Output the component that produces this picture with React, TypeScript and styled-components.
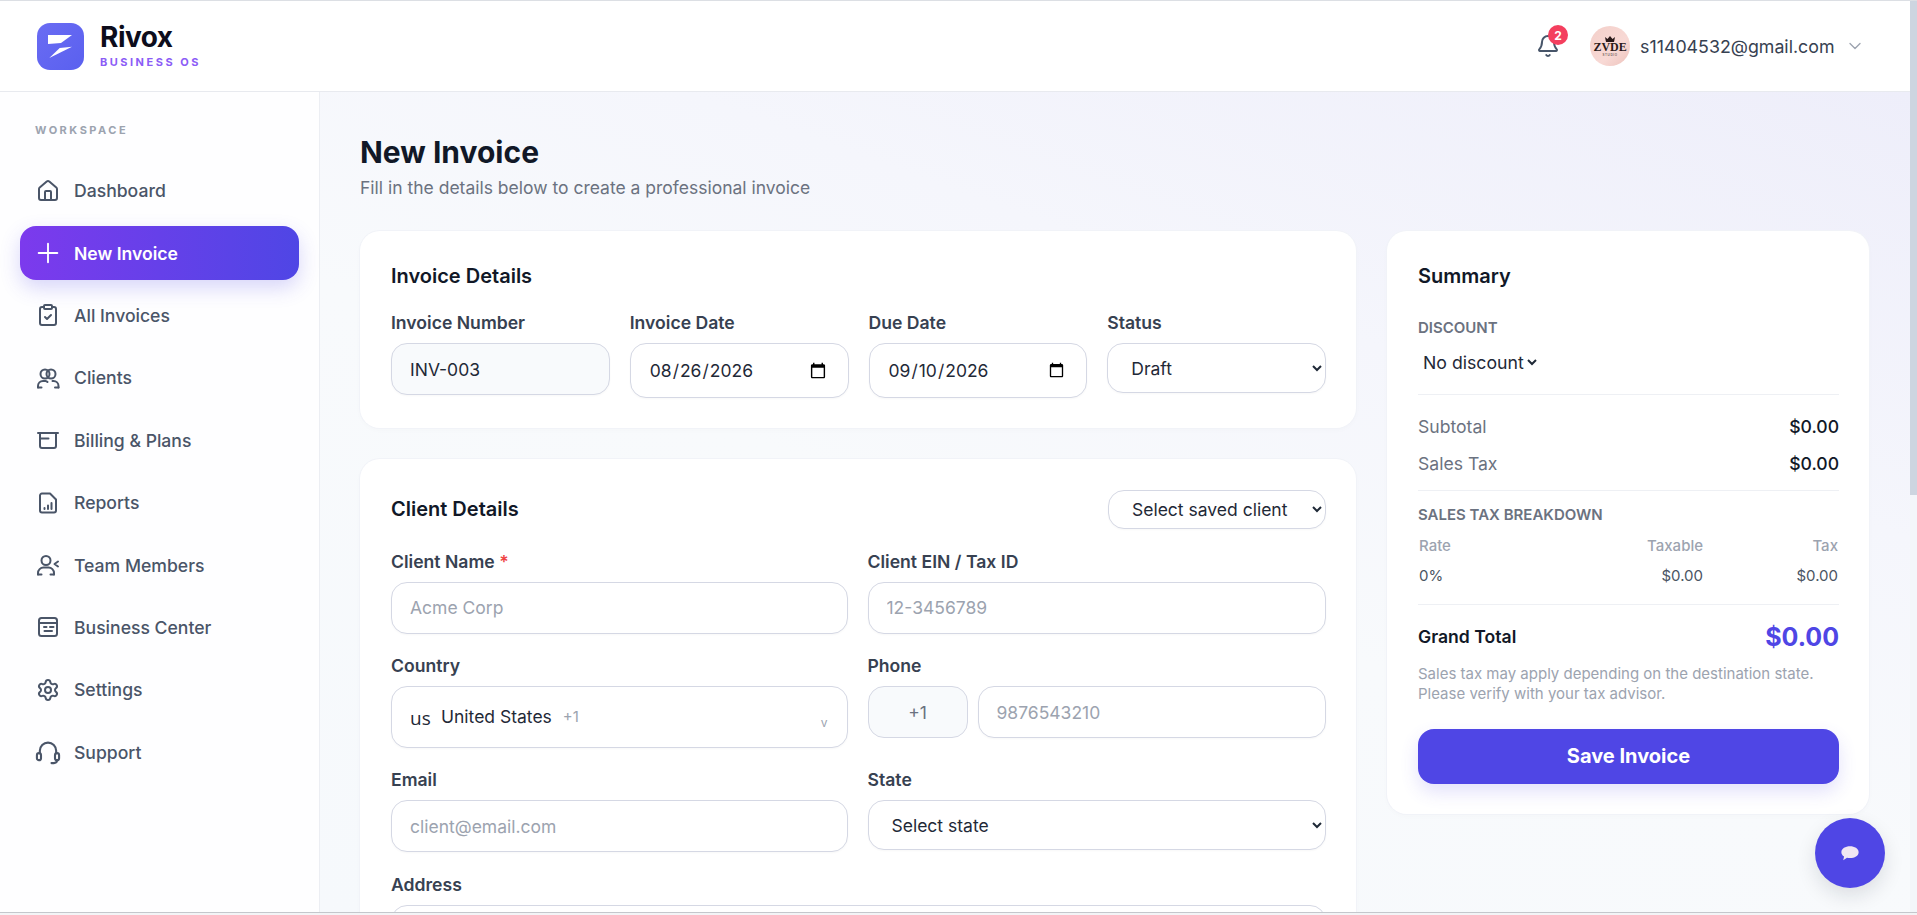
import { FunctionComponent, ReactNode } from 'react';
import styled, { createGlobalStyle } from 'styled-components';
import { Bell, ChevronDown, ClipboardCheck, House, Plus, Settings } from 'lucide-react';

const GlobalStyle = createGlobalStyle`
  html, body {
    margin: 0;
    height: 100%;
    overflow: hidden;
    background: #fff;
    font-family: Inter, "Noto Sans", sans-serif;
  }
  * { box-sizing: border-box; }
  input::placeholder { color: #9ca3af; }
`;

const Frame = styled.div`
  height: 100vh;
  display: flex;
  flex-direction: column;
`;

const TopEdge = styled.div`
  height: 1px;
  flex: none;
  background: #dcdfe4;
`;

const BottomEdge = styled.div`
  height: 3px;
  flex: none;
  border-top: 1px solid #c4c7cc;
  background: #f3f4f6;
`;

const Shell = styled.div`
  flex: 1;
  min-height: 0;
  display: flex;
`;

const PageColumn = styled.div`
  flex: 1;
  min-width: 0;
  display: flex;
  flex-direction: column;
`;

const ScrollTrack = styled.div`
  width: 7px;
  flex: none;
  background: #f3f6fa;
`;

const ScrollThumb = styled.div`
  height: 494px;
  background: #cdd5e0;
`;

const Header = styled.header`
  height: 91px;
  flex: none;
  display: flex;
  align-items: center;
  justify-content: space-between;
  padding: 0 45px 0 37px;
  background: #fff;
  border-bottom: 1px solid #e8eaef;
`;

const Brand = styled.div`
  display: flex;
  align-items: center;
  gap: 16px;
`;

const LogoMark = styled.svg`
  width: 47px;
  height: 47px;
  display: block;
`;

const BrandText = styled.div`
  margin-top: -1px;
`;

const BrandName = styled.div`
  font-size: 28px;
  line-height: 30px;
  font-weight: 700;
  letter-spacing: -0.5px;
  color: #0d0d1c;
`;

const BrandTag = styled.div`
  font-size: 11px;
  line-height: 14px;
  margin-top: 3px;
  font-weight: 700;
  letter-spacing: 2.5px;
  color: #8b5cf6;
`;

const UserArea = styled.div`
  display: flex;
  align-items: center;
`;

const BellWrap = styled.div`
  position: relative;
  width: 24px;
  height: 24px;
  margin-right: 30px;
  color: #475569;
`;

const BellBadge = styled.span`
  position: absolute;
  top: -9px;
  right: -8px;
  width: 20px;
  height: 20px;
  border-radius: 50%;
  display: flex;
  align-items: center;
  justify-content: center;
  background: #f43f5e;
  color: #fff;
  font-size: 12px;
  font-weight: 700;
`;

const Avatar = styled.div`
  width: 40px;
  height: 40px;
  border-radius: 50%;
  display: flex;
  flex-direction: column;
  align-items: center;
  justify-content: center;
  background: linear-gradient(135deg, #f3cfc9, #f8d9d5 60%, #edc2bb);
  color: #2a1a1a;
  margin-right: 10px;
`;

const AvatarText = styled.span`
  font-family: "Liberation Serif", serif;
  font-size: 12px;
  line-height: 11px;
  font-weight: 700;
`;

const AvatarSub = styled.span`
  font-size: 3px;
  line-height: 4px;
  letter-spacing: 0.6px;
`;

const UserEmail = styled.span`
  font-size: 17.8px;
  font-weight: 400;
  color: #374151;
  margin-right: 10.5px;
`;

const UserChevron = styled(ChevronDown)`
  color: #9ca3af;
`;

const Body = styled.div`
  flex: 1;
  min-height: 0;
  display: flex;
`;

const Sidebar = styled.aside`
  width: 320px;
  flex: none;
  padding: 30px 20px 0;
  background: #fefeff;
  border-right: 1px solid #eceef3;
`;

const SideTitle = styled.div`
  height: 16px;
  line-height: 16px;
  margin: 0 0 25.5px 15px;
  font-size: 11px;
  font-weight: 700;
  letter-spacing: 2.5px;
  color: #9ca3af;
`;

const Nav = styled.nav`
  display: flex;
  flex-direction: column;
  gap: 8px;
`;

const NavItem = styled.a<{ $active?: boolean }>`
  height: 54.4px;
  display: flex;
  align-items: center;
  gap: 14px;
  padding-left: 16px;
  border-radius: 16px;
  font-size: 17.6px;
  font-weight: ${(p) => (p.$active ? 600 : 500)};
  color: ${(p) => (p.$active ? '#fff' : '#4a5568')};
  background: ${(p) => (p.$active ? 'linear-gradient(90deg, #7c3aed, #4f46e5)' : 'transparent')};
  box-shadow: ${(p) => (p.$active ? '0 8px 20px rgba(79, 70, 229, 0.22)' : 'none')};

  svg {
    width: 24px;
    height: 24px;
    flex: none;
  }
`;

const NavPlus = styled(Plus)`
  && {
    width: 32px;
    height: 32px;
    margin: 0 -4px;
  }
`;

const Main = styled.main`
  flex: 1;
  min-width: 0;
  overflow: hidden;
  padding: 40px 41px 0 40px;
  background: linear-gradient(200deg, #eeeefa 0%, #f5f6fc 32%, #f8fafc 55%, #f6f9fc 100%);
`;

const PageTitle = styled.h1`
  margin: 0;
  height: 40px;
  line-height: 40px;
  font-size: 30px;
  font-weight: 700;
  color: #111827;
`;

const PageSub = styled.p`
  margin: 4px 0 31px;
  line-height: 24px;
  font-size: 17.5px;
  color: #6b7280;
`;

const Columns = styled.div`
  display: grid;
  grid-template-columns: 1fr 482px;
  gap: 31px;
  align-items: start;
`;

const LeftStack = styled.div`
  display: flex;
  flex-direction: column;
  gap: 31px;
`;

const Card = styled.section`
  padding: 30px 30px 30px 31px;
  background: #fff;
  border-radius: 20px;
  box-shadow: 0 0 0 1px #f1f3f8, 0 2px 6px rgba(15, 23, 42, 0.02);
`;

const CardTitle = styled.h2`
  margin: 0;
  height: 30px;
  line-height: 30px;
  font-size: 20px;
  font-weight: 600;
  color: #111827;
`;

const InvoiceGrid = styled.div`
  display: grid;
  grid-template-columns: repeat(4, 1fr);
  gap: 20px;
  margin-top: 20px;
  align-items: start;
`;

const ClientHead = styled.div`
  display: flex;
  align-items: center;
  justify-content: space-between;
  margin: 0.5px 0 21px;
`;

const ClientGrid = styled.div`
  display: grid;
  grid-template-columns: 456.5px 1fr;
  gap: 20.5px 20px;
  align-items: start;
`;

const Field = styled.div`
  min-width: 0;
`;

const Label = styled.label`
  display: block;
  height: 24px;
  line-height: 24px;
  margin-bottom: 8px;
  font-size: 17.6px;
  font-weight: 600;
  color: #374151;
`;

const Required = styled.span`
  color: #ef4444;
`;

const Input = styled.input<{ $height?: number; $muted?: boolean }>`
  display: block;
  width: 100%;
  height: ${(p) => p.$height ?? 52}px;
  padding: 0 19px 0 18px;
  border: 1px solid #d5d8e4;
  border-radius: 16px;
  outline: none;
  font: 400 17.5px Inter, sans-serif;
  color: #1f2937;
  background: ${(p) => (p.$muted ? '#f8fafc' : '#fff')};
  box-shadow: 0 1px 2px rgba(15, 23, 42, 0.03);
`;

const Select = styled.select<{ $height?: number; $width?: number }>`
  display: block;
  width: ${(p) => (p.$width ? `${p.$width}px` : '100%')};
  height: ${(p) => p.$height ?? 50}px;
  padding: 0 3px 0 19px;
  border: 1px solid #d5d8e4;
  border-radius: 16px;
  outline: none;
  font: 400 17.5px Inter, sans-serif;
  color: #1f2937;
  background: #fff;
  box-shadow: 0 1px 2px rgba(15, 23, 42, 0.03);
`;

const CountryBox = styled.div`
  height: 61.7px;
  display: flex;
  align-items: center;
  padding: 0 18px;
  border: 1px solid #d5d8e4;
  border-radius: 16px;
  background: #fff;
  box-shadow: 0 1px 2px rgba(15, 23, 42, 0.03);
`;

const CountryFlag = styled.span`
  width: 31px;
  padding-top: 3px;
  font-family: "Open Sans", sans-serif;
  font-size: 19px;
  color: #1f2937;
`;

const CountryName = styled.span`
  font-size: 17.5px;
  color: #1f2937;
`;

const CountryDial = styled.span`
  margin-left: 11px;
  font-size: 15px;
  color: #9ca3af;
`;

const CountryCaret = styled.span`
  margin-left: auto;
  padding-top: 12px;
  margin-right: 1px;
  font-size: 12px;
  color: #9ca3af;
`;

const PhoneRow = styled.div`
  display: flex;
  gap: 10px;
`;

const DialBox = styled.div`
  width: 100px;
  height: 52px;
  flex: none;
  display: flex;
  align-items: center;
  justify-content: center;
  border: 1px solid #d5d8e4;
  border-radius: 16px;
  background: #f8fafc;
  font-size: 17.5px;
  color: #6b7280;
`;

const FullRow = styled.div`
  grid-column: 1 / -1;
`;

const SummaryLabel = styled.div<{ $top: number }>`
  height: 20px;
  line-height: 20px;
  margin-top: ${(p) => p.$top}px;
  font-size: 15px;
  font-weight: 600;
  text-transform: uppercase;
  color: #6b7280;
`;

const PlainSelect = styled.select`
  display: block;
  height: 24px;
  margin: 12px 0 0 1px;
  padding: 0;
  border: none;
  outline: none;
  background: transparent;
  font: 400 17.7px Inter, sans-serif;
  color: #1f2937;
`;

const Divider = styled.hr<{ $top: number }>`
  margin: ${(p) => p.$top}px 0 0;
  border: none;
  border-top: 1px solid #eef0f4;
`;

const SummaryRow = styled.div<{ $top: number }>`
  display: flex;
  justify-content: space-between;
  line-height: 24px;
  margin-top: ${(p) => p.$top}px;
  font-size: 17.6px;
  color: #6b7280;
`;

const SummaryValue = styled.span`
  font-weight: 500;
  color: #111827;
`;

const RateGrid = styled.div<{ $top: number; $head?: boolean }>`
  display: grid;
  grid-template-columns: 1fr 150px 135px;
  padding: 0 1px;
  line-height: 20px;
  margin-top: ${(p) => p.$top}px;
  font-size: 15px;
  font-weight: ${(p) => (p.$head ? 500 : 400)};
  color: ${(p) => (p.$head ? '#9ca3af' : '#4b5563')};
`;

const RateEnd = styled.span`
  text-align: right;
`;

const GrandRow = styled.div`
  height: 36px;
  margin-top: 14px;
  display: flex;
  align-items: center;
  justify-content: space-between;
`;

const GrandLabel = styled.span`
  font-size: 17.6px;
  font-weight: 600;
  color: #111827;
`;

const GrandValue = styled.span`
  font-size: 25px;
  font-weight: 700;
  color: #4f46e5;
`;

const Note = styled.p`
  margin: 9px 0 0;
  font-size: 15px;
  line-height: 20px;
  color: #9ca3af;
`;

const SaveButton = styled.button`
  display: block;
  width: 100%;
  height: 55px;
  margin-top: 25px;
  border: none;
  border-radius: 16px;
  background: #4f46e5;
  color: #fff;
  font: 700 20px Inter, sans-serif;
  box-shadow: 0 8px 18px rgba(79, 70, 229, 0.16);
`;

const ChatButton = styled.button`
  position: fixed;
  left: 1815px;
  top: 818px;
  width: 70px;
  height: 70px;
  border: none;
  border-radius: 50%;
  display: flex;
  align-items: center;
  justify-content: center;
  background: #4f46e5;
  box-shadow: 0 8px 20px rgba(15, 23, 42, 0.12);
`;

const iconProps = {
  viewBox: '0 0 24 24',
  fill: 'none',
  stroke: 'currentColor',
  strokeWidth: 2,
  strokeLinecap: 'round' as const,
  strokeLinejoin: 'round' as const,
};

const ClientsIcon = () => (
  <svg {...iconProps}>
    <circle cx="9" cy="8" r="4.5" />
    <circle cx="15" cy="8" r="4.5" />
    <path d="M2 21.5v-1.5a5 5 0 0 1 5-5h2.5a3 3 0 0 1 2 1" />
    <path d="M22.5 21.5v-1.500a5 5 0 0 0-5-5h-1" />
    <path d="M2 21.500h3.500M19 21.500h3.500" />
  </svg>
);

const BillingIcon = () => (
  <svg {...iconProps}>
    <path d="M2 5h20" />
    <path d="M4 5v13a2 2 0 0 0 2 2h12a2 2 0 0 0 2-2V5" />
    <path d="M4 10.500h8.500" />
  </svg>
);

const ReportsIcon = () => (
  <svg {...iconProps}>
    <path d="M6 2.500h8l6 6v11a2 2 0 0 1-2 2H6a2 2 0 0 1-2-2v-15a2 2 0 0 1 2-2z" />
    <path d="M8.500 18v-1M12 18v-3.500M15.500 18v-6" />
  </svg>
);

const TeamIcon = () => (
  <svg {...iconProps}>
    <circle cx="10" cy="7.500" r="4.500" />
    <path d="M2 21.500v-1.500a5.500 5.500 0 0 1 5.500-5.500h5a5.500 5.500 0 0 1 5.500 5.500v1.500" />
    <path d="M2 21.500h3.500M14.500 21.500h3.500" />
    <path d="M22 8.500l-3.500 2.500 3.500 2.500" />
  </svg>
);

const BusinessIcon = () => (
  <svg {...iconProps}>
    <rect x="3" y="3" width="18" height="18" rx="2.500" />
    <path d="M3 8h18" />
    <path d="M8 12h2.500M14 12h3.500M8.500 16h7.500" />
  </svg>
);

const SupportSvg = styled.svg`
  && {
    width: 28px;
    height: 28px;
    margin: 0 -2px;
  }
`;

const SupportIcon = () => (
  <SupportSvg {...iconProps} strokeWidth={1.8}>
    <path d="M5 13v-2a7 7 0 0 1 14 0v2" />
    <rect x="2.500" y="13" width="3.500" height="6" rx="1.750" />
    <rect x="18" y="13" width="3.500" height="6" rx="1.750" />
    <path d="M20 19a3 3 0 0 1-3 2.500h-2" />
  </SupportSvg>
);

const navItems: { label: string; icon: ReactNode; active?: boolean }[] = [
  { label: 'Dashboard', icon: <House strokeWidth={2} /> },
  { label: 'New Invoice', icon: <NavPlus strokeWidth={1.4} />, active: true },
  { label: 'All Invoices', icon: <ClipboardCheck strokeWidth={2} /> },
  { label: 'Clients', icon: <ClientsIcon /> },
  { label: 'Billing & Plans', icon: <BillingIcon /> },
  { label: 'Reports', icon: <ReportsIcon /> },
  { label: 'Team Members', icon: <TeamIcon /> },
  { label: 'Business Center', icon: <BusinessIcon /> },
  { label: 'Settings', icon: <Settings strokeWidth={2} /> },
  { label: 'Support', icon: <SupportIcon /> },
];

const Logo: FunctionComponent = () => (
  <LogoMark viewBox="0 0 47 47">
    <defs>
      <linearGradient id="logoFill" x1="0" y1="0" x2="1" y2="1">
        <stop offset="0" stopColor="#6a6cf3" />
        <stop offset="1" stopColor="#5a60ef" />
      </linearGradient>
    </defs>
    <rect width="47" height="47" rx="13" fill="url(#logoFill)" />
    <polygon points="11,12 35,12 24,20 11,21" fill="#fff" />
    <polygon points="12.300,35 22.700,25 35,23.700" fill="#fff" />
  </LogoMark>
);

const App: FunctionComponent = () => {
  return (
    <Frame>
      <GlobalStyle />
      <TopEdge />
      <Shell>
        <PageColumn>
          <Header>
            <Brand>
              <Logo />
              <BrandText>
                <BrandName>Rivox</BrandName>
                <BrandTag>BUSINESS OS</BrandTag>
              </BrandText>
            </Brand>
            <UserArea>
              <BellWrap>
                <Bell size={24} strokeWidth={2} />
                <BellBadge>2</BellBadge>
              </BellWrap>
              <Avatar>
                <svg width="10" height="6" viewBox="0 0 10 6">
                  <path d="M0 1l2.500 2L5 0l2.500 3L10 1 9 6H1z" fill="#2a1a1a" />
                </svg>
                <AvatarText>ZVDE</AvatarText>
                <AvatarSub>STUDIO</AvatarSub>
              </Avatar>
              <UserEmail>s11404532@gmail.com</UserEmail>
              <UserChevron size={20} strokeWidth={1.6} />
            </UserArea>
          </Header>
          <Body>
            <Sidebar>
              <SideTitle>WORKSPACE</SideTitle>
              <Nav>
                {navItems.map((item) => (
                  <NavItem key={item.label} $active={item.active}>
                    {item.icon}
                    {item.label}
                  </NavItem>
                ))}
              </Nav>
            </Sidebar>
            <Main>
              <PageTitle>New Invoice</PageTitle>
              <PageSub>Fill in the details below to create a professional invoice</PageSub>
              <Columns>
                <LeftStack>
                  <Card>
                    <CardTitle>Invoice Details</CardTitle>
                    <InvoiceGrid>
                      <Field>
                        <Label>Invoice Number</Label>
                        <Input $muted defaultValue="INV-003" />
                      </Field>
                      <Field>
                        <Label>Invoice Date</Label>
                        <Input $height={55} type="date" defaultValue="2026-08-26" />
                      </Field>
                      <Field>
                        <Label>Due Date</Label>
                        <Input $height={55} type="date" defaultValue="2026-09-10" />
                      </Field>
                      <Field>
                        <Label>Status</Label>
                        <Select defaultValue="Draft">
                          <option>Draft</option>
                          <option>Sent</option>
                          <option>Paid</option>
                        </Select>
                      </Field>
                    </InvoiceGrid>
                  </Card>
                  <Card>
                    <ClientHead>
                      <CardTitle>Client Details</CardTitle>
                      <Select $height={39} $width={218} defaultValue="saved">
                        <option value="saved">Select saved client</option>
                      </Select>
                    </ClientHead>
                    <ClientGrid>
                      <Field>
                        <Label>
                          Client Name <Required>*</Required>
                        </Label>
                        <Input placeholder="Acme Corp" />
                      </Field>
                      <Field>
                        <Label>Client EIN / Tax ID</Label>
                        <Input placeholder="12-3456789" />
                      </Field>
                      <Field>
                        <Label>Country</Label>
                        <CountryBox>
                          <CountryFlag>us</CountryFlag>
                          <CountryName>United States</CountryName>
                          <CountryDial>+1</CountryDial>
                          <CountryCaret>v</CountryCaret>
                        </CountryBox>
                      </Field>
                      <Field>
                        <Label>Phone</Label>
                        <PhoneRow>
                          <DialBox>+1</DialBox>
                          <Input placeholder="9876543210" />
                        </PhoneRow>
                      </Field>
                      <Field>
                        <Label>Email</Label>
                        <Input placeholder="client@email.com" />
                      </Field>
                      <Field>
                        <Label>State</Label>
                        <Select defaultValue="none">
                          <option value="none">Select state</option>
                        </Select>
                      </Field>
                      <FullRow>
                        <Label>Address</Label>
                        <Input $height={90} />
                      </FullRow>
                    </ClientGrid>
                  </Card>
                </LeftStack>
                <Card>
                  <CardTitle>Summary</CardTitle>
                  <SummaryLabel $top={27}>Discount</SummaryLabel>
                  <PlainSelect defaultValue="none">
                    <option value="none">No discount</option>
                  </PlainSelect>
                  <Divider $top={20} />
                  <SummaryRow $top={20}>
                    Subtotal
                    <SummaryValue>$0.00</SummaryValue>
                  </SummaryRow>
                  <SummaryRow $top={13}>
                    Sales Tax
                    <SummaryValue>$0.00</SummaryValue>
                  </SummaryRow>
                  <Divider $top={14} />
                  <SummaryLabel $top={14}>Sales Tax Breakdown</SummaryLabel>
                  <RateGrid $top={11} $head>
                    <span>Rate</span>
                    <RateEnd>Taxable</RateEnd>
                    <RateEnd>Tax</RateEnd>
                  </RateGrid>
                  <RateGrid $top={9.7}>
                    <span>0%</span>
                    <RateEnd>$0.00</RateEnd>
                    <RateEnd>$0.00</RateEnd>
                  </RateGrid>
                  <Divider $top={18} />
                  <GrandRow>
                    <GrandLabel>Grand Total</GrandLabel>
                    <GrandValue>$0.00</GrandValue>
                  </GrandRow>
                  <Note>
                    Sales tax may apply depending on the destination state.
                    <br />
                    Please verify with your tax advisor.
                  </Note>
                  <SaveButton>Save Invoice</SaveButton>
                </Card>
              </Columns>
            </Main>
          </Body>
        </PageColumn>
        <ScrollTrack>
          <ScrollThumb />
        </ScrollTrack>
      </Shell>
      <BottomEdge />
      <ChatButton aria-label="Chat">
        <svg width="20" height="17" viewBox="0 0 22 18">
          <path
            d="M11 1c5 0 9.500 2.500 9.500 6.500S16 14 11 14c-1.200 0-2.300-.1-3.300-.4L3.500 16.500l1-4.300C2.500 11 1.500 9.300 1.500 7.500 1.500 3.500 6 1 11 1z"
            fill="#f1e6f3"
          />
        </svg>
      </ChatButton>
    </Frame>
  );
};

export default App;
